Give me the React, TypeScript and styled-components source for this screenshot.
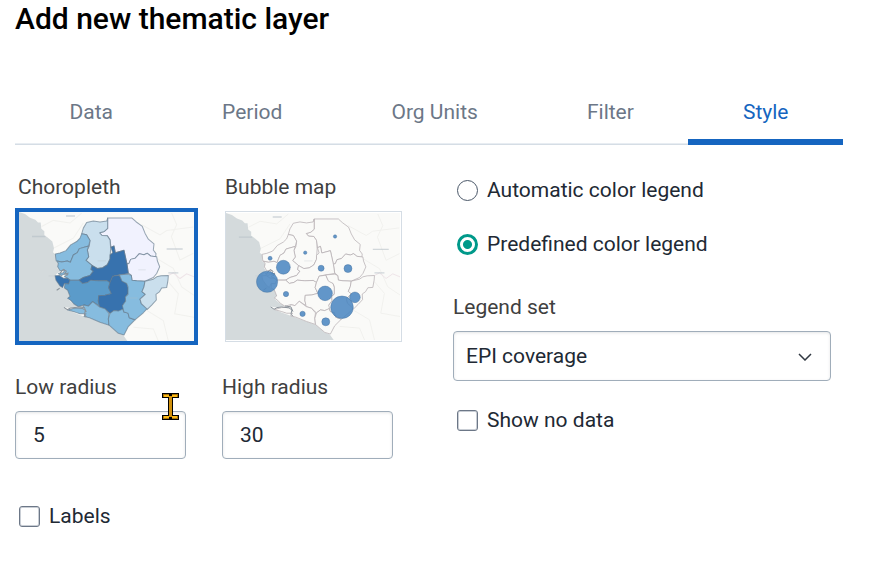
import React, { useState } from 'react';
import styled, { createGlobalStyle, css } from 'styled-components';

const GlobalStyle = createGlobalStyle`
  *, *::before, *::after { box-sizing: border-box; }
  body {
    margin: 0;
    background: #fff;
    color: #212934;
    font: 400 21px/24px Roboto, sans-serif;
  }
  button, input, select { font: inherit; color: inherit; margin: 0; }
`;

const Dialog = styled.main`
  padding: 0 28px 32px 15px;
`;

const Title = styled.h1`
  margin: 0;
  padding-top: 2px;
  font-size: 30px;
  font-weight: 500;
  line-height: 34px;
  color: #000;
`;

const TabBar = styled.div`
  display: flex;
  margin-top: 44px;
  box-shadow: inset 0 -1px 0 #d5dde5, inset 0 -2px 0 #e8edf2;
`;

const Tab = styled.button<{ $active: boolean }>`
  flex: 1 1 auto;
  height: 65px;
  padding: 0 0 1px;
  border: 0;
  background: none;
  color: #6c7787;
  cursor: pointer;
  ${({ $active }) =>
    $active &&
    css`
      color: #1565c0;
      box-shadow: inset 0 -6px 0 #1565c0;
    `}
`;

const Panel = styled.div`
  display: grid;
  grid-template-columns: 438fr 390fr;
  padding-top: 30px;
`;

const Column = styled.section`
  min-width: 0;
`;

const Pair = styled.div`
  display: grid;
  grid-template-columns: 183px 180px;
  column-gap: 24px;
`;

const MapChoice = styled.button`
  display: flex;
  flex-direction: column;
  padding: 0;
  border: 0;
  background: none;
  color: #404040;
  text-align: left;
  cursor: pointer;
`;

const MapCaption = styled.span`
  padding-left: 3px;
`;

const Thumbnail = styled.span<{ $selected: boolean }>`
  display: block;
  margin-top: ${({ $selected }) => ($selected ? 9 : 12)}px;
  margin-left: ${({ $selected }) => ($selected ? 0 : 3)}px;
  padding: ${({ $selected }) => ($selected ? '0' : '1px 1px 1px 0')};
  border: ${({ $selected }) => ($selected ? '4px solid #1565c0' : '1px solid #d5dde5')};
  svg { display: block; width: 100%; }
`;

const RadiusPair = styled(Pair)`
  margin-top: 30px;
`;

const Field = styled.div`
  position: relative;
  display: flex;
  flex-direction: column;
  gap: 12px;
`;

const FieldLabel = styled.label`
  color: #404040;
`;

const control = css`
  border: 1px solid #a0adba;
  border-radius: 4px;
  background: #fff;
  box-shadow: inset 0 1px 3px rgba(48, 54, 60, 0.13);
  outline: none;
`;

const NumberInput = styled.input`
  ${control}
  width: 171px;
  height: 48px;
  padding: 0 17px;
`;

const Pointer = styled.svg`
  position: absolute;
  left: 147px;
  top: 18px;
`;

const SelectBox = styled.div`
  display: grid;
  align-items: center;
  margin-right: 12px;
  select, svg { grid-area: 1 / 1; }
  svg { justify-self: end; margin-right: 19px; pointer-events: none; }
`;

const Select = styled.select`
  ${control}
  width: 100%;
  height: 50px;
  padding: 0 40px 0 12px;
  appearance: none;
`;

const Choice = styled.label`
  display: flex;
  align-items: center;
  gap: 9px;
  padding-left: 4px;
`;

const LegendChoices = styled.div`
  display: flex;
  flex-direction: column;
  gap: 30px;
  padding: 3px 0 39px;
`;

const Spaced = styled.div`
  margin-top: 27px;
`;

const LabelsRow = styled.div`
  margin-top: 45px;
`;

const Checkbox = styled.input`
  appearance: none;
  flex: none;
  width: 21px;
  height: 21px;
  border: 1px solid #6c7787;
  border-radius: 3px;
  background: #fff;
  box-shadow: inset 0 0 0 1px #c9ced5;
  &:checked { background: #00998a; border-color: #00998a; }
`;

const Radio = styled.input`
  appearance: none;
  flex: none;
  width: 21px;
  height: 21px;
  border: 1px solid #4a5768;
  border-radius: 50%;
  background: #fff;
  &:checked {
    border: 3px solid #00998a;
    background: radial-gradient(circle, #00998a 4px, #fff 5px);
  }
`;

const districts = [
  { fill: '#f1f2fe', d: 'M293 55H366L378 66L397 80L405 100L415 118L432 132L430 150L438 161L437 171L422 168L412 160L402 164L388 161L375 175L362 178L357 190L351 192L342 151L316 158L312 138L303 142L300 120L292 108L276 107L269 99L283 95L293 86Z' },
  { fill: '#f1f2fe', d: 'M351 192L357 190L362 178L375 175L388 161L402 164L412 160L422 168L440 170L442 182L449 200L440 220L430 232L405 243L380 242L366 240L364 226L355 218Z' },
  { fill: '#cadfed', d: 'M215 102L220 85L230 68L250 64L270 67L290 64L293 55V86L283 95L269 99L276 107L292 108L300 120L302 145L300 177L292 194L278 203L262 205L246 196L228 181L236 170L232 150L238 138L240 122L230 105Z' },
  { fill: '#86bcdf', d: 'M215 102L230 105L240 122L236 138L208 146L202 158L190 165L181 187L172 183L155 186L138 182L136 162L150 159L168 152L182 135L200 125L210 115Z' },
  { fill: '#86bcdf', d: 'M140 183L155 186L172 183L181 187L190 165L202 158L208 146L236 138L232 150L236 170L228 181L246 196L243 208L250 213L240 226L220 232L207 240L180 240L172 234L163 229L174 222L162 222L154 226L145 220L160 218L164 210L150 212L143 200L145 190Z' },
  { fill: '#3772ae', d: 'M303 142L312 138L316 158L342 151L351 192L355 220L328 224L308 228L300 248L290 241L265 242L242 240L232 247L218 250L207 240L220 232L240 226L250 213L243 208L246 196L262 205L278 203L292 194L300 177V165L308 158Z' },
  { fill: '#3772ae', d: 'M135 227L148 226L160 234L172 234L180 240L176 251L163 250L158 262L150 257L138 240Z' },
  { fill: '#5b9bca', d: 'M180 240H207L218 250L232 247L242 240L265 242L290 241L300 247L296 262L304 280L285 285L266 286L265 302L270 318L248 304L235 317L222 314L205 319L191 310L183 301L173 294L180 288L173 270L163 263L165 250L176 251Z' },
  { fill: '#3772ae', d: 'M308 228L328 225L335 240L350 250L354 262V280L346 290L347 302L337 316L346 324L325 332L312 330L300 339L285 325L269 320L265 302L266 286L285 285L304 280L296 262L300 247Z' },
  { fill: '#86bcdf', d: 'M173 329L195 323L218 322L222 314L235 317L248 304L269 320L285 325L297 339L295 355L297 374L270 365L238 352L222 348L228 340L210 340L195 335Z' },
  { fill: '#86bcdf', d: 'M300 339L312 330L325 332L338 326L342 335L354 338L358 352L375 358L355 378L342 403L325 398L297 374L295 355Z' },
  { fill: '#86bcdf', d: 'M328 224L355 222L364 226L366 240L380 242L405 243L402 260L396 274L406 282L390 296L394 310L412 324L400 337L375 358L358 352L354 338L342 335L337 316L347 302L346 290L354 282V260L350 250L336 243Z' },
  { fill: '#cadfed', d: 'M405 243L430 237L440 230L453 227L475 226L474 240L470 262L455 263L448 275L438 282L439 299L425 314L412 327L394 310L390 296L406 282L396 274L402 260Z' },
];

// x, y, radius
const bubbles = [
  [356, 108, 5], [266, 157, 5], [160, 174, 6], [200, 201, 21], [151, 245, 32],
  [314, 204, 9], [395, 205, 12], [208, 282, 8], [326, 280, 22], [416, 292, 16],
  [377, 322, 34], [258, 342, 8], [328, 366, 12],
];

const BaseMap = ({ bubble = false }: { bubble?: boolean }) => (
  <svg
    height={bubble ? 127 : 129}
    viewBox="27 37 525 384"
    preserveAspectRatio="none"
    aria-hidden="true"
  >
    <path fill="#fafaf8" d="M27 37H552V421H27Z" />
    <g fill="none" stroke="#f1f1ee" strokeWidth="3">
      <path d="M95 80L130 62L180 70L215 40M130 145L190 115L220 70M395 75L450 105L470 92L550 82M485 40L500 75L484 110L510 180L550 160M440 175L490 205L515 260L552 285M475 245L505 280L494 340L552 350M410 330L460 360L475 421M370 380L430 385L445 421" />
      <path stroke="#eee4e8" d="M475 226L490 218L510 235L530 221L552 230" />
    </g>
    <path
      fill="#d4dadc"
      d="M27 37L45 43L60 54L76 60L84 68H92L94 87L103 94V106L112 112L127 125L132 145L129 157L138 165L136 182L146 191L142 204L150 214L140 221L134 229L139 243L150 257L162 263L173 270L180 288L173 296L188 309L205 319L175 322L162 320L172 329L195 338L222 348L250 358L298 376L325 398L340 404L352 421H27Z"
    />
    <g
      stroke={bubble ? '#b1aaae' : '#63788b'}
      strokeWidth="3"
      strokeLinejoin="round"
      strokeOpacity={bubble ? 0.7 : 0.65}
    >
      {districts.map(({ fill, d }) => (
        <path key={d} d={d} fill={bubble ? '#fafaf8' : fill} />
      ))}
    </g>
    <g fill="none" stroke="#8a929a" strokeWidth="3">
      <path d="M150 219L160 208L169 213L164 221L174 219L170 227M140 270L149 264M162 321L172 328L181 323L195 321L217 324L226 330L223 343L229 349M205 318L223 321L229 335" />
    </g>
    <g stroke="#b6c0c7" strokeWidth="4" opacity="0.6">
      <path d="M168 49H195M66 110H106M470 147H518M475 218H505" />
      <path opacity="0.35" d="M263 182H288M385 209H407M358 293H383M116 227H132" />
    </g>
    {bubble &&
      bubbles.map(([cx, cy, r]) => (
        <circle key={`${cx}-${cy}`} cx={cx} cy={cy} r={r} fill="#4c87c2" fillOpacity="0.88" stroke="#47729f" strokeWidth="2" strokeOpacity="0.7" />
      ))}
  </svg>
);

const tabs = ['Data', 'Period', 'Org Units', 'Filter', 'Style'];

export default function App() {
  const [tab, setTab] = useState('Style');
  const [mapType, setMapType] = useState('choropleth');
  const [legend, setLegend] = useState('predefined');

  return (
    <>
      <GlobalStyle />
      <Dialog>
        <Title>Add new thematic layer</Title>
        <TabBar role="tablist">
          {tabs.map((name) => (
            <Tab key={name} type="button" role="tab" aria-selected={tab === name} $active={tab === name} onClick={() => setTab(name)}>
              {name}
            </Tab>
          ))}
        </TabBar>
        <Panel>
          <Column>
            <Pair>
              <MapChoice type="button" aria-pressed={mapType === 'choropleth'} onClick={() => setMapType('choropleth')}>
                <MapCaption>Choropleth</MapCaption>
                <Thumbnail $selected={mapType === 'choropleth'}><BaseMap /></Thumbnail>
              </MapChoice>
              <MapChoice type="button" aria-pressed={mapType === 'bubble'} onClick={() => setMapType('bubble')}>
                <MapCaption>Bubble map</MapCaption>
                <Thumbnail $selected={mapType === 'bubble'}><BaseMap bubble /></Thumbnail>
              </MapChoice>
            </Pair>
            <RadiusPair>
              <Field>
                <FieldLabel htmlFor="low">Low radius</FieldLabel>
                <NumberInput id="low" inputMode="numeric" defaultValue="5" />
                <Pointer width="17" height="27" viewBox="0 0 17 27" aria-hidden="true">
                  <path d="M0 0H17V5H11V22H17V27H0V22H6V5H0Z" fill="#000" />
                  <path d="M7 3H10V24H7Z" fill="#d0900c" />
                  <path d="M1 1H7V4H1ZM10 1H16V4H10ZM1 23H7V26H1ZM10 23H16V26H10Z" fill="#a87408" />
                  <path d="M2 2H7V4H2ZM10 2H15V4H10ZM2 23H7V25H2ZM10 23H15V25H10Z" fill="#fbb917" />
                </Pointer>
              </Field>
              <Field>
                <FieldLabel htmlFor="high">High radius</FieldLabel>
                <NumberInput id="high" inputMode="numeric" defaultValue="30" />
              </Field>
            </RadiusPair>
            <LabelsRow>
              <Choice><Checkbox type="checkbox" />Labels</Choice>
            </LabelsRow>
          </Column>
          <Column>
            <LegendChoices role="radiogroup" aria-label="Color legend">
              <Choice>
                <Radio type="radio" name="legend" checked={legend === 'automatic'} onChange={() => setLegend('automatic')} />
                Automatic color legend
              </Choice>
              <Choice>
                <Radio type="radio" name="legend" checked={legend === 'predefined'} onChange={() => setLegend('predefined')} />
                Predefined color legend
              </Choice>
            </LegendChoices>
            <Field>
              <FieldLabel htmlFor="legend-set">Legend set</FieldLabel>
              <SelectBox>
                <Select id="legend-set" defaultValue="epi">
                  <option value="epi">EPI coverage</option>
                </Select>
                <svg width="14" height="10" viewBox="0 0 14 10" aria-hidden="true">
                  <path d="M1 3L7 9L13 3" fill="none" stroke="#303841" strokeWidth="1.5" />
                </svg>
              </SelectBox>
            </Field>
            <Spaced>
              <Choice><Checkbox type="checkbox" />Show no data</Choice>
            </Spaced>
          </Column>
        </Panel>
      </Dialog>
    </>
  );
}
